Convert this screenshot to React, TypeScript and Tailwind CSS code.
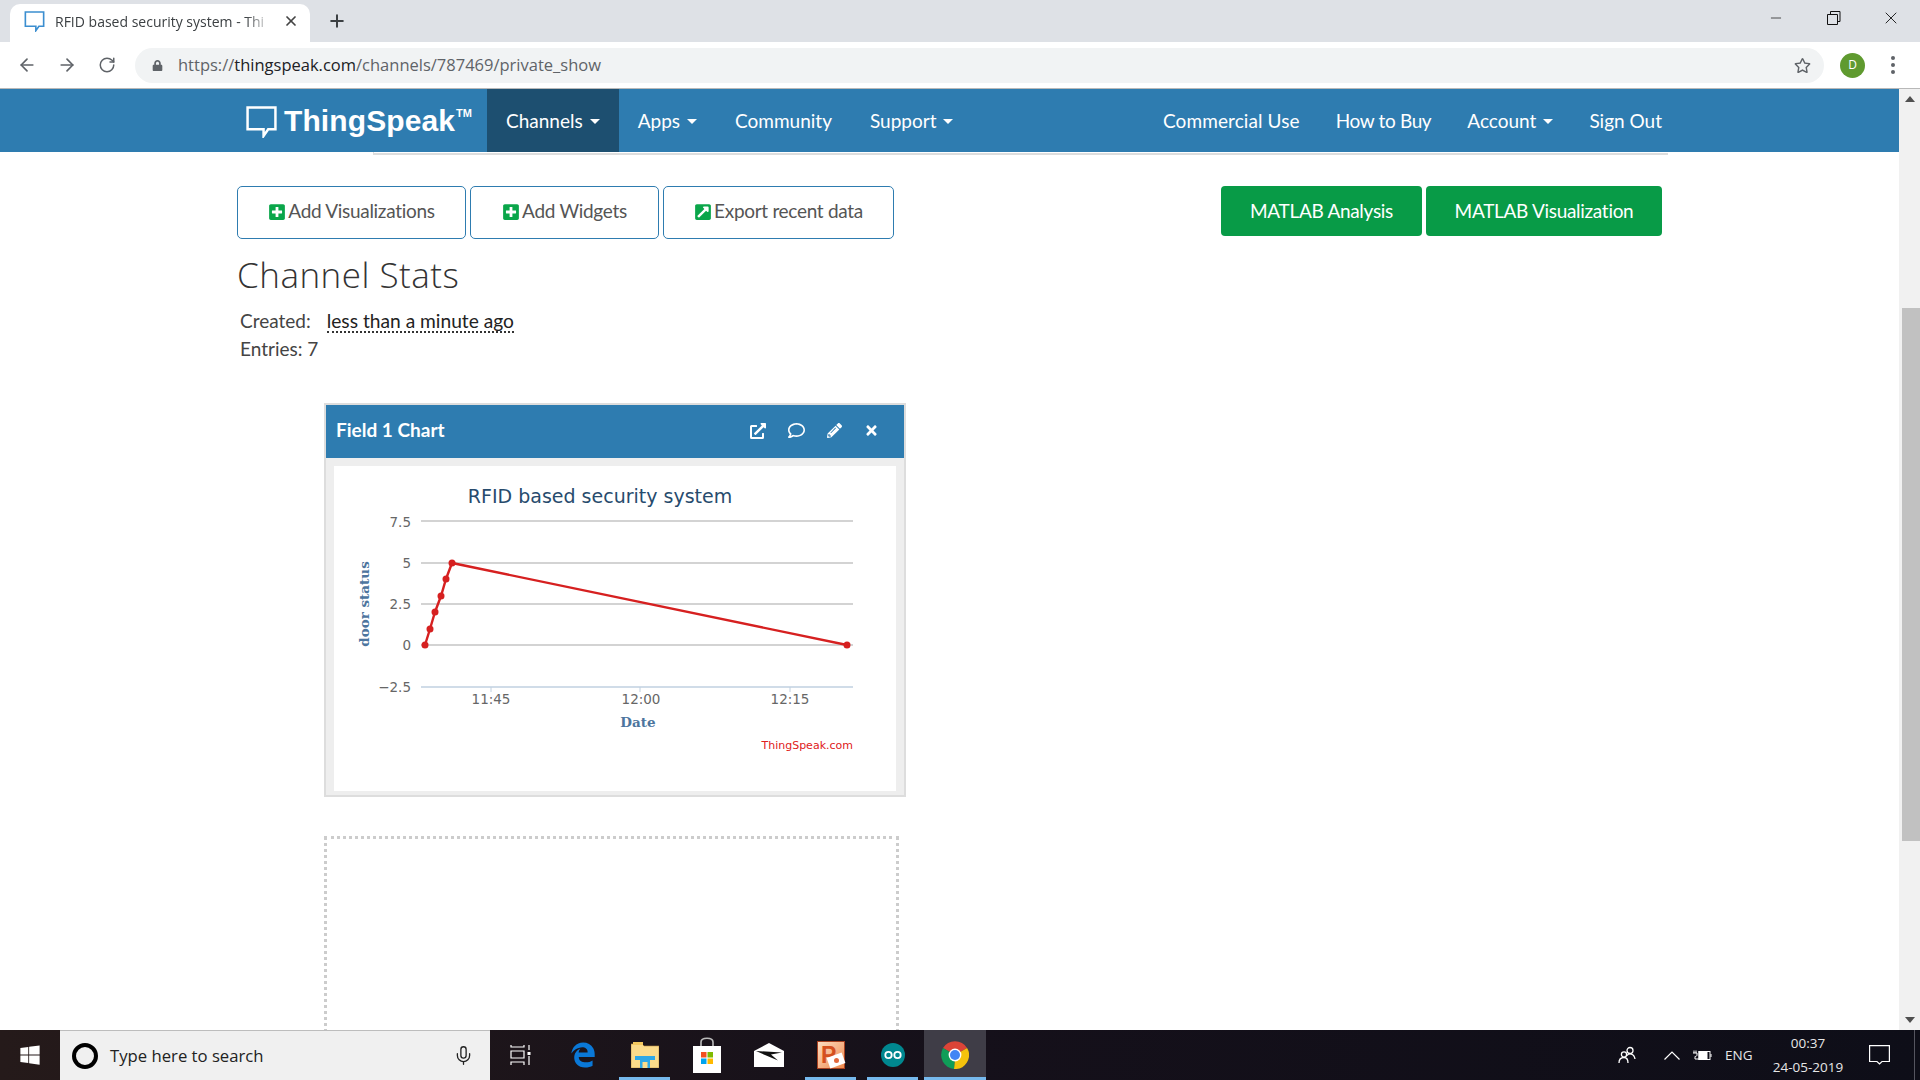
import { FaPlusSquare, FaExternalLinkSquareAlt, FaExternalLinkAlt, FaRegComment, FaPencilAlt, FaTimes, FaWindows, FaEdgeLegacy, FaRegStar, FaLock } from "react-icons/fa";
import { ArrowLeft, ArrowRight, RotateCw, X, Plus, Minus, Mic } from "lucide-react";

const Caret = () => <span className="ml-[7px] inline-block w-0 h-0 border-x-[5px] border-x-transparent border-t-[5px] border-t-white align-middle" />;

function NavItem({ label, caret, active, extra, px }: { label: string; caret?: boolean; active?: boolean; extra?: string; px?: string }) {
  return (
    <div className={`h-full flex items-center pt-[2px] ${px ?? "px-[19px]"} text-white text-[19px] ${active ? "bg-[#1d4f70]" : ""} ${extra ?? ""}`}>
      <span>{label}</span>
      {caret && <Caret />}
    </div>
  );
}

function Bubble({ className, stroke, sw }: { className: string; stroke: string; sw: number }) {
  return (
    <svg viewBox="0 0 30 31" className={className} fill="none" stroke={stroke} strokeWidth={sw}>
      <path d="M1.5 1.5H28.5V22.5H21.5L17 29V22.5H1.5Z" />
    </svg>
  );
}

function OutlineBtn({ w, icon, label }: { w: string; icon: React.ReactNode; label: string }) {
  return (
    <div className={`${w} h-[53px] border-[1.5px] border-[#2e7cb0] rounded-[5px] flex items-center justify-center pb-[2px] text-[19px] text-[#555] tracking-[-0.3px]`}>
      <span className="text-[#0aa64a] mr-[2px] text-[18px]">{icon}</span>
      {label}
    </div>
  );
}

function Chart() {
  const ys = [521, 563, 604, 645];
  const pts: [number, number][] = [[425, 645], [430, 629], [435, 612], [441, 596], [446, 579], [452, 563], [847, 645]];
  const tick = { fontFamily: '"DejaVu Sans", sans-serif', fontSize: 13.5, fill: "#666" };
  const lab = { fontFamily: '"DejaVu Serif", serif', fontSize: 13.5, fontWeight: 700, fill: "#4d759e" };
  return (
    <svg viewBox="334 466 563 325" className="w-[563px] h-[325px] block">
      <text x="600" y="503" textAnchor="middle" fontFamily='"DejaVu Sans", sans-serif' fontSize="19" fill="#274b6d">RFID based security system</text>
      {ys.map((y) => <line key={y} x1="421" x2="853" y1={y} y2={y} stroke="#c4c4c4" strokeWidth="1.6" />)}
      <line x1="421" x2="853" y1="687" y2="687" stroke="#c0d0e0" strokeWidth="1.6" />
      {[491, 640, 790].map((x) => <line key={x} x1={x} x2={x} y1="687" y2="692" stroke="#c0d0e0" />)}
      {[["7.5", 527], ["5", 568], ["2.5", 609], ["0", 650], ["−2.5", 692]].map(([t, y]) => (
        <text key={t} x="411" y={y} textAnchor="end" {...tick}>{t}</text>
      ))}
      {[["11:45", 491], ["12:00", 641], ["12:15", 790]].map(([t, x]) => (
        <text key={t} x={x} y="704" textAnchor="middle" {...tick}>{t}</text>
      ))}
      <text x="638" y="727" textAnchor="middle" {...lab}>Date</text>
      <text transform="translate(369 604) rotate(-90)" textAnchor="middle" {...lab}>door status</text>
      <polyline points={pts.map((p) => p.join(",")).join(" ")} fill="none" stroke="#d62020" strokeWidth="2.4" />
      {pts.map(([x, y]) => <circle key={x} cx={x} cy={y} r="3.5" fill="#d62020" />)}
      <text x="853" y="749" textAnchor="end" fontFamily='"DejaVu Sans", sans-serif' fontSize="11" fill="#e02020">ThingSpeak.com</text>
    </svg>
  );
}

function TaskIcon({ children, line, active }: { children: React.ReactNode; line?: boolean; active?: boolean }) {
  return (
    <div className={`relative w-[62px] h-full flex items-center justify-center ${active ? "bg-[#3f3d47]" : ""}`}>
      {children}
      {line && <div className={`absolute bottom-0 h-[3px] bg-[#76b9ed] ${active ? "inset-x-0" : "left-[5px] right-[6px]"}`} />}
    </div>
  );
}

export default function App() {
  return (
    <div className="w-[1920px] h-[1080px] flex flex-col overflow-hidden bg-white text-[#333]" style={{ fontFamily: 'Lato, sans-serif' }}>
      {/* tab strip */}
      <div className="h-[42px] bg-[#dee1e6] flex items-end pl-[10px] shrink-0" style={{ fontFamily: '"Open Sans", sans-serif' }}>
        <div className="w-[300px] h-[38px] bg-white rounded-t-[10px] flex items-center pl-[14px] pr-[8px] pb-[4px]">
          <Bubble className="w-[21px] h-[21px] shrink-0" stroke="#3b8ed0" sw={2.4} />
          <span className="ml-[10px] text-[14px] text-[#3c4043] w-[217px] overflow-hidden whitespace-nowrap" style={{ maskImage: "linear-gradient(to right, black 88%, transparent 100%)" }}>RFID based security system - Thi</span>
          <X size={16} strokeWidth={2.6} className="ml-[11px] text-[#444]" />
        </div>
        <div className="ml-[17px] h-[42px] flex items-center"><Plus size={20} strokeWidth={2.4} className="text-[#3c4043]" /></div>
        <div className="ml-auto h-[36px] flex items-center self-start pr-[1px]">
          <div className="w-[57px] flex justify-center mr-[2px]"><Minus size={16} strokeWidth={1} className="text-black" /></div>
          <svg viewBox="0 0 14 14" className="w-[14px] h-[14px] mx-[21px]" fill="none" stroke="#111" strokeWidth="1"><path d="M3.5 3V.5H13V10.5H10.5M.5 3.5H10.5V13.5H.5Z" /></svg>
          <div className="w-[57px] flex justify-center"><X size={20} strokeWidth={1} className="text-black" /></div>
        </div>
      </div>
      {/* toolbar */}
      <div className="h-[47px] shrink-0 bg-white border-b border-[#b8b8b8] flex items-center" style={{ fontFamily: '"Open Sans", sans-serif' }}>
        <div className="w-[135px] flex items-center text-[#5f6368]">
          <ArrowLeft size={20} className="ml-[17px]" />
          <ArrowRight size={20} className="ml-[20px]" />
          <RotateCw size={18} className="ml-[21px]" />
        </div>
        <div className="w-[1689px] h-[35px] rounded-full bg-[#f1f3f4] flex items-center pl-[17px] pr-[13px]">
          <FaLock size={11} className="text-[#5f6368]" />
          <span className="ml-[15px] text-[16.5px] text-[#5f6368]">https://<span className="text-[#202124]">thingspeak.com</span>/channels/787469/private_show</span>
          <FaRegStar size={17} className="ml-auto text-[#5f6368]" />
        </div>
        <div className="ml-[16px] w-[25px] h-[25px] rounded-full bg-[#5f9a2f] flex items-center justify-center text-white text-[12px]">D</div>
        <div className="ml-[26px] flex flex-col gap-[3px]">
          {[0, 1, 2].map((i) => <div key={i} className="w-[4px] h-[4px] rounded-full bg-[#5f6368]" />)}
        </div>
      </div>
      {/* page */}
      <div className="flex-1 min-h-0 flex">
        <div className="w-[1899px] flex flex-col overflow-hidden">
          <div className="h-[63px] shrink-0 bg-[#2e7cb0] flex items-center justify-between pl-[246px] pr-[219px]">
            <div className="h-full flex items-center">
              <Bubble className="w-[31px] h-[32px] mt-[3px] shrink-0" stroke="#fff" sw={2.4} />
              <span className="ml-[7px] w-[172px] whitespace-nowrap text-white text-[30px] font-bold tracking-[0.1px]" style={{ fontFamily: '"Liberation Sans", sans-serif' }}>ThingSpeak</span>
              <span className="mb-[14px] w-[31px] text-white text-[11px] font-bold" style={{ fontFamily: '"Liberation Sans", sans-serif' }}>TM</span>
              <NavItem label="Channels" caret active />
              <NavItem label="Apps" caret />
              <NavItem label="Community" />
              <NavItem label="Support" caret />
            </div>
            <div className="h-full flex items-center">
              <NavItem label="Commercial Use" extra="tracking-[0.1px]" px="px-[18px]" />
              <NavItem label="How to Buy" extra="tracking-[-0.35px]" px="px-[18px]" />
              <NavItem label="Account" caret px="px-[18px]" />
              <NavItem label="Sign Out" px="px-[18px]" />
            </div>
          </div>
          <div className="relative h-[3px] shrink-0 ml-[373px] w-[1295px] border-b-2 border-[#dddddd]">
            <div className="absolute left-0 top-0 w-px h-[3px] bg-[#dddddd]" />
          </div>
          <div className="pl-[237px] w-[1662px] pt-[31px]">
            <div className="flex items-start">
              <div className="flex gap-[4px]">
                <OutlineBtn w="w-[229px]" icon={<FaPlusSquare className="inline -mt-[3px]" />} label="Add Visualizations" />
                <OutlineBtn w="w-[189px]" icon={<FaPlusSquare className="inline -mt-[3px]" />} label="Add Widgets" />
                <OutlineBtn w="w-[231px]" icon={<FaExternalLinkSquareAlt className="inline -mt-[3px]" />} label="Export recent data" />
              </div>
              <div className="ml-auto flex gap-[4px]">
                <div className="w-[201px] h-[50px] rounded-[4px] bg-[#089b47] text-white text-[19px] tracking-[-0.3px] flex items-center justify-center">MATLAB Analysis</div>
                <div className="w-[236px] h-[50px] rounded-[4px] bg-[#089b47] text-white text-[19px] tracking-[-0.3px] flex items-center justify-center">MATLAB Visualization</div>
              </div>
            </div>
            <h2 className="mt-[14px] text-[35px] leading-[44px] font-light tracking-[0.5px]" style={{ fontFamily: '"Open Sans", sans-serif' }}>Channel Stats</h2>
            <div className="mt-[10px] ml-[3px] text-[19px] leading-[28px] text-[#444]">
              <div className="flex">
                <span>Created:</span>
                <span className="ml-[16px] text-[#222] text-[19.2px] leading-[24px] mt-[2px] h-[24px] border-b-2 border-dotted border-[#333]">less than a minute ago</span>
              </div>
              <div>Entries: 7</div>
            </div>
            <div className="mt-[40px] ml-[87px] w-[582px] h-[394px] border-2 border-[#dddddd] bg-[#eeeeee] flex flex-col">
              <div className="h-[53px] shrink-0 bg-[#2e7cb0] flex items-center pl-[10px] pb-[2px] text-white">
                <span className="text-[19px] font-bold">Field 1 Chart</span>
                <div className="ml-auto flex items-center gap-[22px] pr-[25px]">
                  <FaExternalLinkAlt size={16} />
                  <FaRegComment size={17} />
                  <FaPencilAlt size={15} />
                  <FaTimes size={15} />
                </div>
              </div>
              <div className="mx-[8px] mt-[8px] bg-white">
                <Chart />
              </div>
            </div>
            <div className="mt-[39px] ml-[87px] w-[575px] h-[300px] border-[3px] border-dotted border-[#cccccc]" />
          </div>
        </div>
        {/* scrollbar */}
        <div className="w-[21px] bg-[#f1f1f1] flex flex-col items-center">
          <div className="h-[20px] flex items-center justify-center"><div className="w-0 h-0 border-x-[5px] border-x-transparent border-b-[6px] border-b-[#505050]" /></div>
          <div className="mt-[199px] w-[18px] ml-[2px] h-[533px] bg-[#c1c1c1]" />
          <div className="mt-auto h-[20px] flex items-center justify-center"><div className="w-0 h-0 border-x-[5px] border-x-transparent border-t-[6px] border-t-[#505050]" /></div>
        </div>
      </div>
      {/* taskbar */}
      <div className="h-[50px] shrink-0 flex items-center bg-gradient-to-r from-[#251a1a] via-[#15101a] to-[#0e0e18]" style={{ fontFamily: '"Open Sans", sans-serif' }}>
        <div className="w-[60px] flex justify-center text-white"><FaWindows size={22} /></div>
        <div className="w-[430px] h-full bg-[#f0f0f0] border-t border-[#bdbdbd] flex items-center">
          <div className="ml-[12px] w-[26px] h-[26px] rounded-full border-[4px] border-black bg-transparent" />
          <span className="ml-[12px] text-[16.7px] text-[#222]">Type here to search</span>
          <Mic size={21} strokeWidth={1.5} className="ml-auto mr-[16px] text-[#222]" />
        </div>
        <div className="h-full flex">
          <TaskIcon>
            <svg viewBox="0 0 22 20" className="w-[22px] h-[20px]" fill="none" stroke="#fff" strokeWidth="1.2"><path d="M1 0V2H14V0M1 6H14V13H1ZM1 20V17H14V20M19 0V5M19 11V20" /><rect x="17.5" y="7" width="3" height="3" fill="#fff" stroke="none" /></svg>
          </TaskIcon>
          <TaskIcon><FaEdgeLegacy size={26} className="text-[#0a78d7]" /></TaskIcon>
          <TaskIcon line>
            <svg viewBox="0 0 28 26" className="w-[28px] h-[26px]"><path d="M0 2H11L13 4H28V26H0Z" fill="#fcdc8b" stroke="#b98f3f" strokeWidth=".6" /><path d="M4 14H24V18H19V26H9V18H4Z" fill="#2fa8e6" /><path d="M11.5 20H16.5V26H11.5Z" fill="#fcdc8b" /><path d="M2 0H12V3H2Z" fill="#f4c95f" /></svg>
          </TaskIcon>
          <TaskIcon>
            <svg viewBox="0 0 30 38" className="w-[30px] h-[38px]"><path d="M9 10V6C9 1 21 1 21 6V10" fill="none" stroke="#bbb" strokeWidth="1.6" /><rect x="1" y="10" width="28" height="27" fill="#fff" /><rect x="9" y="16" width="5.5" height="5.5" fill="#f25022" /><rect x="15.5" y="16" width="5.5" height="5.5" fill="#7fba00" /><rect x="9" y="22.5" width="5.5" height="5.5" fill="#00a4ef" /><rect x="15.5" y="22.5" width="5.5" height="5.5" fill="#ffb900" /></svg>
          </TaskIcon>
          <TaskIcon>
            <svg viewBox="0 0 30 24" className="w-[30px] h-[24px]"><path d="M0 8L15 0L30 8V24H0Z" fill="#fff" /><path d="M2 8L28 9.5L17 11.5L24 17.5L11 12Z" fill="#111" /></svg>
          </TaskIcon>
          <TaskIcon line>
            <div className="relative w-[28px] h-[28px] bg-gradient-to-br from-[#fbdcc0] to-[#ee8a4c] border border-[#a8401f]">
              <span className="absolute left-[3px] -top-[4px] text-[23px] font-bold text-[#d5501f]" style={{ fontFamily: '"Liberation Sans", sans-serif' }}>P</span>
              <div className="absolute right-[0px] bottom-[2px] w-[16px] h-[11px] bg-white -rotate-[20deg]" />
              <div className="absolute right-[5px] bottom-[5px] w-[5px] h-[5px] rounded-full bg-[#e2683c]" />
            </div>
          </TaskIcon>
          <TaskIcon line>
            <svg viewBox="0 0 24 24" className="w-[24px] h-[24px]"><circle cx="12" cy="12" r="12" fill="#00878f" /><g fill="none" stroke="#fff" strokeWidth="1.8"><circle cx="7.5" cy="12" r="3.2" /><circle cx="16.5" cy="12" r="3.2" /></g></svg>
          </TaskIcon>
          <TaskIcon line active>
            <svg viewBox="0 0 28 28" className="w-[28px] h-[28px]">
              <path d="M14 14L2 7.1A14 14 0 0 1 26.1 7Z" fill="#db4437" />
              <path d="M14 14L26.1 7A14 14 0 0 1 13 28Z" fill="#f4c20d" />
              <path d="M14 14L13 28A14 14 0 0 1 2 7.1Z" fill="#0f9d58" />
              <circle cx="14" cy="14" r="6.4" fill="#fff" />
              <circle cx="14" cy="14" r="5" fill="#4285f4" />
            </svg>
          </TaskIcon>
        </div>
        <div className="ml-auto h-full flex items-center text-[#e6e6e6]">
          <svg viewBox="0 0 18 18" className="w-[18px] h-[18px]" fill="none" stroke="#fff" strokeWidth="1.3"><circle cx="12" cy="4.5" r="3" /><circle cx="6" cy="8.5" r="2.6" /><path d="M1 17C1 13 3 11.5 6 11.5C9 11.5 10 14 10 17M9 9.5C11 7 16 7 17 13" /></svg>
          <svg viewBox="0 0 16 9" className="ml-[28px] w-[16px] h-[9px]" fill="none" stroke="#fff" strokeWidth="1.2"><path d="M.5 8.5L8 1L15.5 8.5" /></svg>
          <svg viewBox="0 0 20 12" className="ml-[12px] w-[20px] h-[12px]" fill="none" stroke="#fff" strokeWidth="1"><path d="M4 1.5V4M2 1.5V4M1 4H5V6C5 7 4 7.5 3 7.5V10H7" /><rect x="7" y="2.5" width="11" height="8" /><rect x="7" y="2.5" width="8" height="8" fill="#fff" /><path d="M19 5V8" /></svg>
          <span className="ml-[13px] w-[28px] text-[13.5px] whitespace-nowrap">ENG</span>
          <div className="ml-[13px] w-[84px] text-center text-[13.5px] leading-[24px] whitespace-nowrap">
            <div>00:37</div>
            <div>24-05-2019</div>
          </div>
          <svg viewBox="0 0 21 20" className="ml-[19px] w-[21px] h-[20px]" fill="none" stroke="#fff" strokeWidth="1.2"><path d="M.6 .6H20.4V16.5H13L10.5 19L8 16.5H.6Z" /></svg>
          <div className="ml-[24px] mr-[5px] w-px h-full bg-[#55555f]" />
        </div>
      </div>
    </div>
  );
}
